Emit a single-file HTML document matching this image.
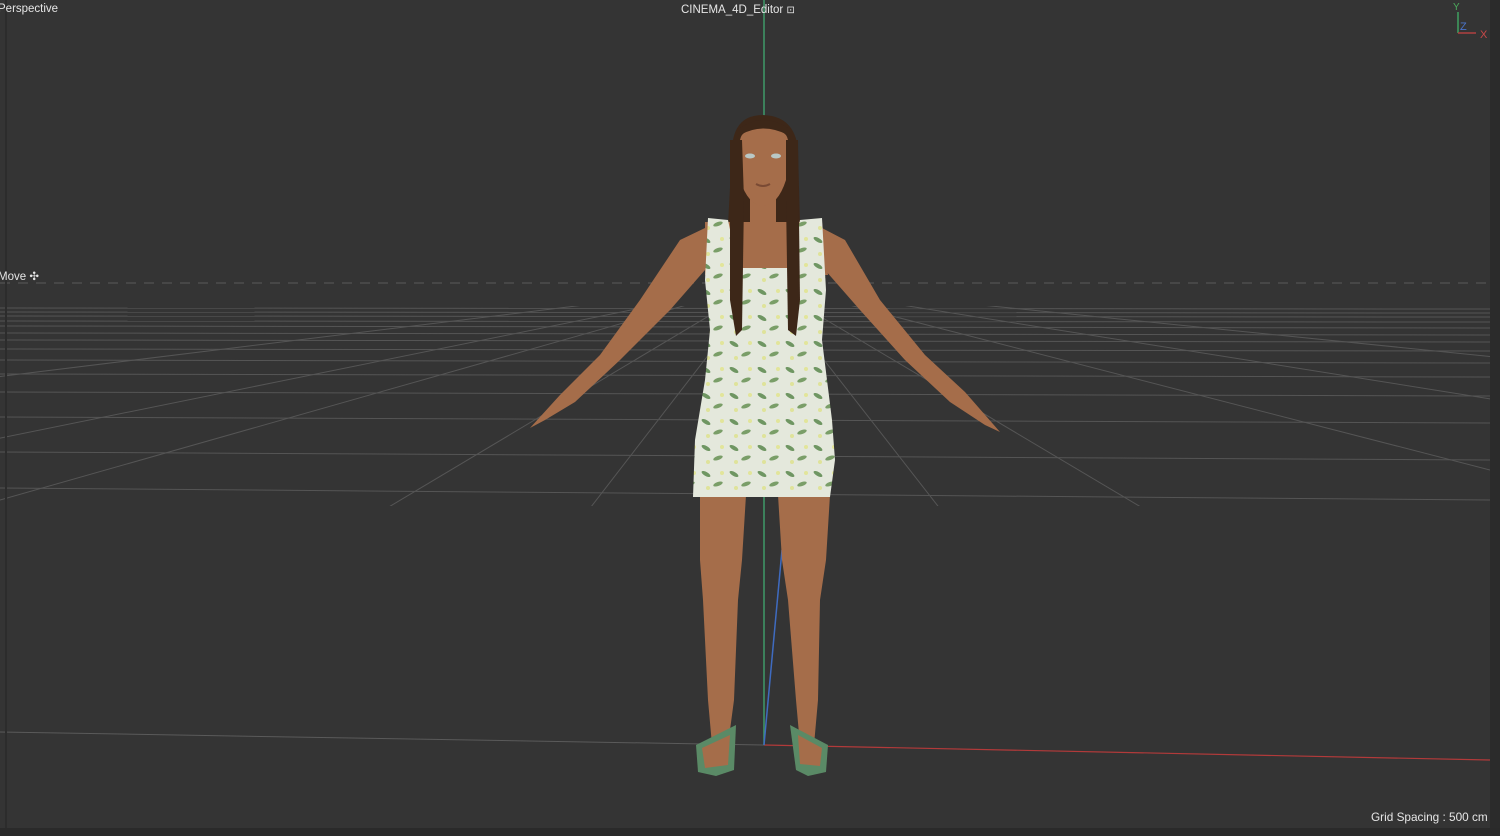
<!DOCTYPE html>
<html><head><meta charset="utf-8"><style>
html,body{margin:0;padding:0;background:#333;overflow:hidden}
#v{position:relative;width:1500px;height:836px;background:#343434;font-family:"Liberation Sans",sans-serif;color:#e6e6e6;font-size:11.5px}
.t{position:absolute;white-space:nowrap}
</style></head><body><div id="v">
<svg width="1500" height="836" style="position:absolute;left:0;top:0">
<defs>
<clipPath id="g"><rect x="0" y="306" width="1490" height="200"/></clipPath>
<pattern id="fl" width="28" height="26" patternUnits="userSpaceOnUse">
<rect width="28" height="26" fill="#e4e8dc"/>
<ellipse cx="6" cy="6" rx="5" ry="2" fill="#6f9662" transform="rotate(30 6 6)"/>
<ellipse cx="18" cy="16" rx="5" ry="2" fill="#7a9e68" transform="rotate(-20 18 16)"/>
<circle cx="22" cy="5" r="2" fill="#e2e59a"/>
<circle cx="8" cy="20" r="2" fill="#dfe39a"/>
</pattern>
</defs>
<rect x="1490" y="0" width="10" height="836" fill="#2b2b2b"/>
<rect x="0" y="828" width="1500" height="8" fill="#2a2a2a"/>
<line x1="0" y1="283" x2="1490" y2="283" stroke="#5a5a5a" stroke-dasharray="10 8"/>
<g stroke="#555" stroke-width="1">
<line x1="0" y1="308" x2="1490" y2="309"/><line x1="0" y1="312" x2="1490" y2="313"/>
<line x1="0" y1="316" x2="1490" y2="317"/><line x1="0" y1="321" x2="1490" y2="322"/>
<line x1="0" y1="326" x2="1490" y2="328"/><line x1="0" y1="333" x2="1490" y2="335"/>
<line x1="0" y1="340" x2="1490" y2="342"/><line x1="0" y1="349" x2="1490" y2="351"/>
<line x1="0" y1="360" x2="1490" y2="363"/><line x1="0" y1="374" x2="1490" y2="377"/>
<line x1="0" y1="392" x2="1490" y2="396"/><line x1="0" y1="417" x2="1490" y2="423"/>
<line x1="0" y1="452" x2="1490" y2="460"/><line x1="0" y1="488" x2="1490" y2="500"/>
</g>
<g stroke="#555" clip-path="url(#g)">
<line x1="764" y1="283" x2="-1500" y2="560"/><line x1="764" y1="283" x2="-600" y2="560"/>
<line x1="764" y1="283" x2="0" y2="500"/><line x1="764" y1="283" x2="300" y2="560"/>
<line x1="764" y1="283" x2="550" y2="560"/><line x1="764" y1="283" x2="690" y2="560"/>
<line x1="764" y1="283" x2="840" y2="560"/><line x1="764" y1="283" x2="980" y2="560"/>
<line x1="764" y1="283" x2="1230" y2="560"/><line x1="764" y1="283" x2="1490" y2="470"/>
<line x1="764" y1="283" x2="2500" y2="560"/><line x1="764" y1="283" x2="3500" y2="560"/>
</g>
<line x1="0" y1="732" x2="764" y2="745" stroke="#5a5a5a"/>
<line x1="764" y1="745" x2="1490" y2="760" stroke="#b23a3a" stroke-width="1.2"/>
<line x1="764" y1="0" x2="764" y2="745" stroke="#3e9a68" stroke-width="1.5"/>
<line x1="782" y1="550" x2="764" y2="745" stroke="#3f6bc0" stroke-width="1.5"/>
<line x1="6" y1="0" x2="6" y2="828" stroke="#2c2c2c" stroke-width="2"/>
<path d="M732 150 Q733 115 763 115 Q795 116 798 150 L800 225 L728 225Z" fill="#3d2718"/>
<g fill="#a56d4a">
<path d="M705 228 L680 240 L640 300 L600 355 L560 395 L530 428 L545 420 L575 402 L620 360 L670 310 L705 270Z"/>
<path d="M822 228 L845 240 L880 300 L925 355 L965 392 L1000 432 L985 425 L950 402 L905 360 L860 310 L825 270Z"/>
<path d="M700 495 L746 495 L742 560 L738 600 L734 700 L728 745 L712 745 L708 700 L703 600 L700 560Z"/>
<path d="M778 495 L830 495 L826 560 L820 600 L818 700 L814 745 L800 745 L796 700 L788 600 L782 560Z"/>
<rect x="750" y="190" width="26" height="40"/>
<path d="M705 222 L822 222 L828 275 L705 275Z"/>
<path d="M740 140 Q742 128 763 128 Q786 128 788 140 L786 180 Q778 205 763 206 Q748 205 740 180Z"/>
</g>
<path d="M708 218 L728 220 L738 268 L790 268 L800 220 L822 218 L826 290 L822 340 L832 420 L835 460 L830 497 L693 497 L695 440 L705 380 L710 330 L705 280Z" fill="url(#fl)"/>
<g fill="#3d2718">
<path d="M730 140 L742 140 L744 200 L742 330 L736 336 L730 300Z"/>
<path d="M786 140 L798 140 L800 300 L796 336 L788 330 L786 200Z"/>
</g>
<path d="M740 135 Q763 122 788 135 L788 128 Q763 112 740 128Z" fill="#3d2718"/>
<ellipse cx="750" cy="156" rx="5" ry="2.5" fill="#b9c8c6"/><ellipse cx="776" cy="156" rx="5" ry="2.5" fill="#b9c8c6"/>
<path d="M756 184 Q763 188 770 184" stroke="#7a4a34" stroke-width="2" fill="none"/>
<g fill="#5a8a66">
<path d="M696 745 L736 725 L734 770 L716 776 L698 772Z"/>
<path d="M790 725 L828 745 L826 772 L808 776 L796 770Z"/>
</g>
<g fill="#a56d4a"><path d="M702 748 L730 735 L728 765 L705 768Z"/><path d="M798 735 L822 748 L820 766 L800 764Z"/></g>
<line x1="1458" y1="12" x2="1458" y2="33" stroke="#3ea060" stroke-width="1.5"/>
<line x1="1458" y1="33" x2="1476" y2="33" stroke="#b04040" stroke-width="1.5"/>
</svg>
<div class="t" style="left:-2px;top:3px;font-size:11.5px">Perspective</div>
<div class="t" style="left:681px;top:4px;font-size:11.5px">CINEMA_4D_Editor <span style="font-size:10px">⊡</span></div>
<div class="t" style="left:-2px;top:269px;font-size:11.5px">Move ✣</div>
<div class="t" style="left:1453px;top:2px;color:#4caa5c;font-size:10px">Y</div>
<div class="t" style="left:1460px;top:21px;color:#4b74c9;font-size:11px">Z</div>
<div class="t" style="left:1480px;top:29px;color:#c84848;font-size:11px">X</div>
<div class="t" style="left:1371px;top:810px;font-size:11.8px">Grid Spacing : 500 cm</div>
</div></body></html>
